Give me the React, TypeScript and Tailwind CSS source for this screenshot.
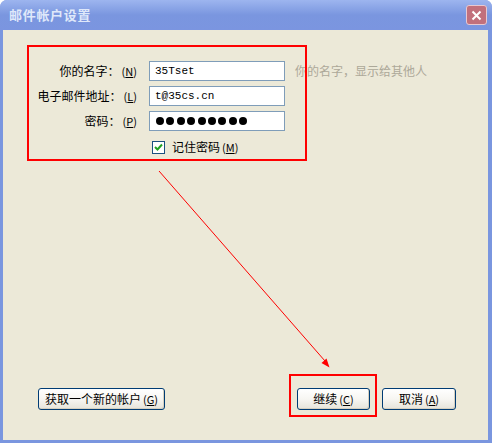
import { FC, ReactNode } from 'react';

const cjk = { fontFamily: '"Noto Sans CJK SC", "Noto Sans", sans-serif' };
const mono = { fontFamily: '"Liberation Mono", "Noto Sans CJK SC", monospace' };

const Key: FC<{ k: string }> = ({ k }) => (
  <span className="ml-0.5 text-[11px]">
    (<span className="underline underline-offset-1">{k}</span>)
  </span>
);

const XpButton: FC<{ w: string; children: ReactNode }> = ({ w, children }) => (
  <button
    className={`${w} h-[22px] rounded-[3px] border border-[#003c74] bg-gradient-to-b from-white via-[#f7f6f2] to-[#e6e4da] text-[12px] leading-none text-black shadow-[inset_-1px_-1px_0_#d6d0c0]`}
  >
    {children}
  </button>
);

const rows = [
  { label: '你的名字：', k: 'N', value: '35Tset', hint: '你的名字，显示给其他人' },
  { label: '电子邮件地址：', k: 'L', value: 't@35cs.cn' },
  { label: '密码：', k: 'P', password: 9 },
];

export default function App() {
  return (
    <div className="relative h-[443px] w-[492px] overflow-hidden bg-white" style={cjk}>
      {/* window */}
      <div className="flex h-[443px] w-[492px] flex-col rounded-t-[7px] bg-[#7a96df]">
        <div className="flex h-[30px] flex-none items-center justify-between rounded-t-[7px] bg-gradient-to-b from-[#9db5ef] via-[#7a96df] to-[#7b95e0] pr-[5px] pl-[9px]">
          <span className="text-[13px] font-bold tracking-[0.7px] text-[#dfe8fa]">邮件帐户设置</span>
          <div className="flex h-[20px] w-[21px] items-center justify-center rounded-[3px] border border-[#e8c8d0] bg-[#c2707c]">
            <svg width="11" height="11" viewBox="0 0 11 11">
              <path d="M1.5 1.5 L9.5 9.5 M9.5 1.5 L1.5 9.5" stroke="white" strokeWidth="2" />
            </svg>
          </div>
        </div>

        <div className="mr-[4px] mb-[3px] ml-[3px] flex flex-1 flex-col bg-[#ece9d8] text-[12px] text-black">
          <div className="grid grid-cols-[120px_136px_auto] items-center gap-x-[12px] gap-y-[5px] pt-[31px] pl-[14px]">
            {rows.map((r) => (
              <div key={r.k} className="contents">
                <div className="flex h-[20px] items-center justify-end whitespace-nowrap">
                  {r.label}
                  <Key k={r.k} />
                </div>
                <div className="flex h-[20px] items-center border border-[#7f9db9] bg-white px-[5px]">
                  {r.password ? (
                    <div className="flex gap-[2.4px] pl-[1px]">
                      {Array.from({ length: r.password }).map((_, i) => (
                        <span key={i} className="block h-[8px] w-[8px] rounded-full bg-black" />
                      ))}
                    </div>
                  ) : (
                    <span className="text-[11px] text-black" style={mono}>
                      {r.value}
                    </span>
                  )}
                </div>
                <div className="-ml-[2px] whitespace-nowrap text-[12px] text-[#aca899]">{r.hint ?? ''}</div>
              </div>
            ))}
            <div />
            <div className="mt-[2px] flex items-center gap-[7px] pl-[3px]">
              <span className="flex h-[13px] w-[13px] items-center justify-center border border-[#1c5180] bg-white">
                <svg width="9" height="9" viewBox="0 0 9 9">
                  <path d="M1 4 L3.5 6.5 L8 1.5" fill="none" stroke="#21a121" strokeWidth="2" />
                </svg>
              </span>
              <span className="whitespace-nowrap">
                记住密码
                <Key k="M" />
              </span>
            </div>
            <div />
          </div>

          <div className="flex-1" />

          <div className="flex items-center pr-[32px] pb-[30px] pl-[35px]">
            <XpButton w="w-[127px]">
              获取一个新的帐户
              <Key k="G" />
            </XpButton>
            <div className="flex-1" />
            <XpButton w="w-[73px]">
              继续
              <Key k="C" />
            </XpButton>
            <div className="w-[12px]" />
            <XpButton w="w-[74px]">
              取消
              <Key k="A" />
            </XpButton>
          </div>
        </div>
      </div>

      {/* annotations */}
      <div className="absolute top-[45px] left-[27px] h-[116px] w-[280px] border-2 border-[#ff0000]" />
      <div className="absolute top-[374px] left-[289px] h-[43px] w-[88px] border-2 border-[#ff0000]" />
      <svg className="pointer-events-none absolute top-0 left-0" width="492" height="443">
        <line x1="159" y1="171" x2="325" y2="361" stroke="#ff0000" strokeWidth="1" />
        <polygon points="329.5,367.5 321.5,363 326.5,358.5" fill="#ff0000" />
      </svg>
    </div>
  );
}
